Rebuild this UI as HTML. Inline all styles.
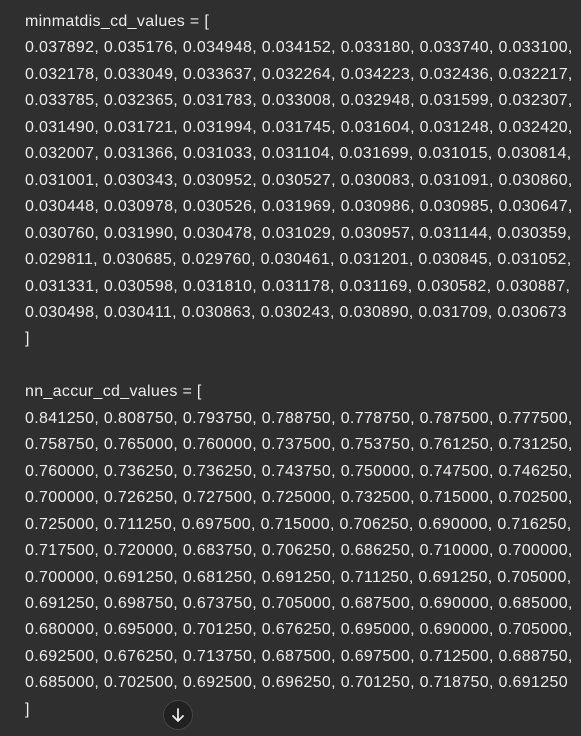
<!DOCTYPE html>
<html><head><meta charset="utf-8"><style>
html,body{margin:0;padding:0;width:581px;height:736px;overflow:hidden;background:#2f2f2f;}
.c{position:absolute;left:25px;top:9px;color:#ececec;font-family:"Liberation Sans","DejaVu Sans",sans-serif;font-size:16px;letter-spacing:0.33px;line-height:26.45px;white-space:pre;}
.btn{position:absolute;left:163px;top:700px;width:30px;height:30px;border-radius:50%;background:#212121;border:1px solid #444;box-sizing:border-box;}
</style></head><body>
<div class="c">minmatdis_cd_values = [
0.037892, 0.035176, 0.034948, 0.034152, 0.033180, 0.033740, 0.033100,
0.032178, 0.033049, 0.033637, 0.032264, 0.034223, 0.032436, 0.032217,
0.033785, 0.032365, 0.031783, 0.033008, 0.032948, 0.031599, 0.032307,
0.031490, 0.031721, 0.031994, 0.031745, 0.031604, 0.031248, 0.032420,
0.032007, 0.031366, 0.031033, 0.031104, 0.031699, 0.031015, 0.030814,
0.031001, 0.030343, 0.030952, 0.030527, 0.030083, 0.031091, 0.030860,
0.030448, 0.030978, 0.030526, 0.031969, 0.030986, 0.030985, 0.030647,
0.030760, 0.031990, 0.030478, 0.031029, 0.030957, 0.031144, 0.030359,
0.029811, 0.030685, 0.029760, 0.030461, 0.031201, 0.030845, 0.031052,
0.031331, 0.030598, 0.031810, 0.031178, 0.031169, 0.030582, 0.030887,
0.030498, 0.030411, 0.030863, 0.030243, 0.030890, 0.031709, 0.030673
]

nn_accur_cd_values = [
0.841250, 0.808750, 0.793750, 0.788750, 0.778750, 0.787500, 0.777500,
0.758750, 0.765000, 0.760000, 0.737500, 0.753750, 0.761250, 0.731250,
0.760000, 0.736250, 0.736250, 0.743750, 0.750000, 0.747500, 0.746250,
0.700000, 0.726250, 0.727500, 0.725000, 0.732500, 0.715000, 0.702500,
0.725000, 0.711250, 0.697500, 0.715000, 0.706250, 0.690000, 0.716250,
0.717500, 0.720000, 0.683750, 0.706250, 0.686250, 0.710000, 0.700000,
0.700000, 0.691250, 0.681250, 0.691250, 0.711250, 0.691250, 0.705000,
0.691250, 0.698750, 0.673750, 0.705000, 0.687500, 0.690000, 0.685000,
0.680000, 0.695000, 0.701250, 0.676250, 0.695000, 0.690000, 0.705000,
0.692500, 0.676250, 0.713750, 0.687500, 0.697500, 0.712500, 0.688750,
0.685000, 0.702500, 0.692500, 0.696250, 0.701250, 0.718750, 0.691250
]</div>
<div class="btn"><svg width="28" height="28" viewBox="0 0 28 28" style="position:absolute;left:0;top:0"><path d="M14 8v12M9 15l5 5 5-5" stroke="#ececec" stroke-width="1.8" fill="none" stroke-linecap="round" stroke-linejoin="round"/></svg></div>
</body></html>
